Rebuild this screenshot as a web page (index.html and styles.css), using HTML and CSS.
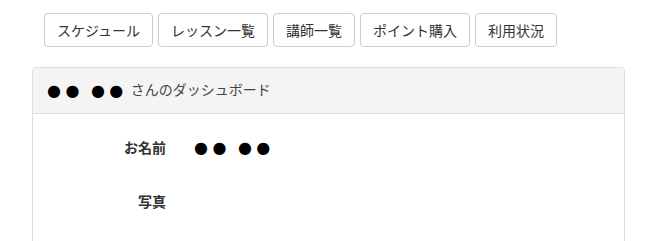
FILE: index.html
```html
<!DOCTYPE html>
<html lang="ja">
<head>
  <meta charset="UTF-8" />
  <meta name="viewport" content="width=device-width, initial-scale=1.0"/>
  <title>ダッシュボード</title>
  <link rel="stylesheet" href="styles.css">
</head>
<body>
  <div class="page">
    <nav class="menu">
      <a href="#" class="btn">スケジュール</a>
      <a href="#" class="btn">レッスン一覧</a>
      <a href="#" class="btn">講師一覧</a>
      <a href="#" class="btn">ポイント購入</a>
      <a href="#" class="btn">利用状況</a>
    </nav>

    <div class="panel">
      <div class="panel-heading">
        <span class="name">●● ●●</span>
        <span class="title">さんのダッシュボード</span>
      </div>
      <div class="panel-body">
        <div class="row">
          <div class="label">お名前</div>
          <div class="value"><span class="name">●● ●●</span></div>
        </div>
        <div class="row">
          <div class="label">写真</div>
          <div class="value"></div>
        </div>
      </div>
    </div>
  </div>
</body>
</html>
```

FILE: styles.css
```css
* {
  margin: 0;
  padding: 0;
  box-sizing: border-box;
}

body {
  font-family: "Noto Sans CJK JP", "Liberation Sans", sans-serif;
  font-size: 14px;
  line-height: 20px;
  color: #333;
  background-color: #fff;
}

.page {
  padding: 13px 35px 0 32px;
}

.menu {
  display: flex;
  gap: 5px;
  padding-left: 12px;
  margin-bottom: 20px;
}

.btn {
  display: inline-block;
  padding: 6px 12px;
  border: 1px solid #ccc;
  border-radius: 4px;
  color: #333;
  text-decoration: none;
  white-space: nowrap;
}

.panel {
  border: 1px solid #ddd;
  border-radius: 4px;
  height: 300px;
}

.panel-heading {
  display: flex;
  align-items: center;
  gap: 3px;
  height: 46px;
  padding: 0 15px 3px 14px;
  background-color: #f4f4f4;
  border-bottom: 1px solid #ddd;
  border-radius: 3px 3px 0 0;
  color: #444;
}

.name {
  font-family: "DejaVu Sans", sans-serif;
  font-size: 16px;
  line-height: 20px;
  color: #000;
  letter-spacing: 4.5px;
  word-spacing: -2.6px;
}

.panel-heading .name {
  margin-top: 4px;
}

.panel-body {
  padding: 16px 0 0;
}

.row {
  display: grid;
  grid-template-columns: 148px 1fr;
  height: 34px;
  margin-bottom: 20px;
  align-items: center;
}

.label {
  text-align: right;
  padding-right: 15px;
  font-weight: bold;
}

.value {
  padding-left: 13px;
}
```
